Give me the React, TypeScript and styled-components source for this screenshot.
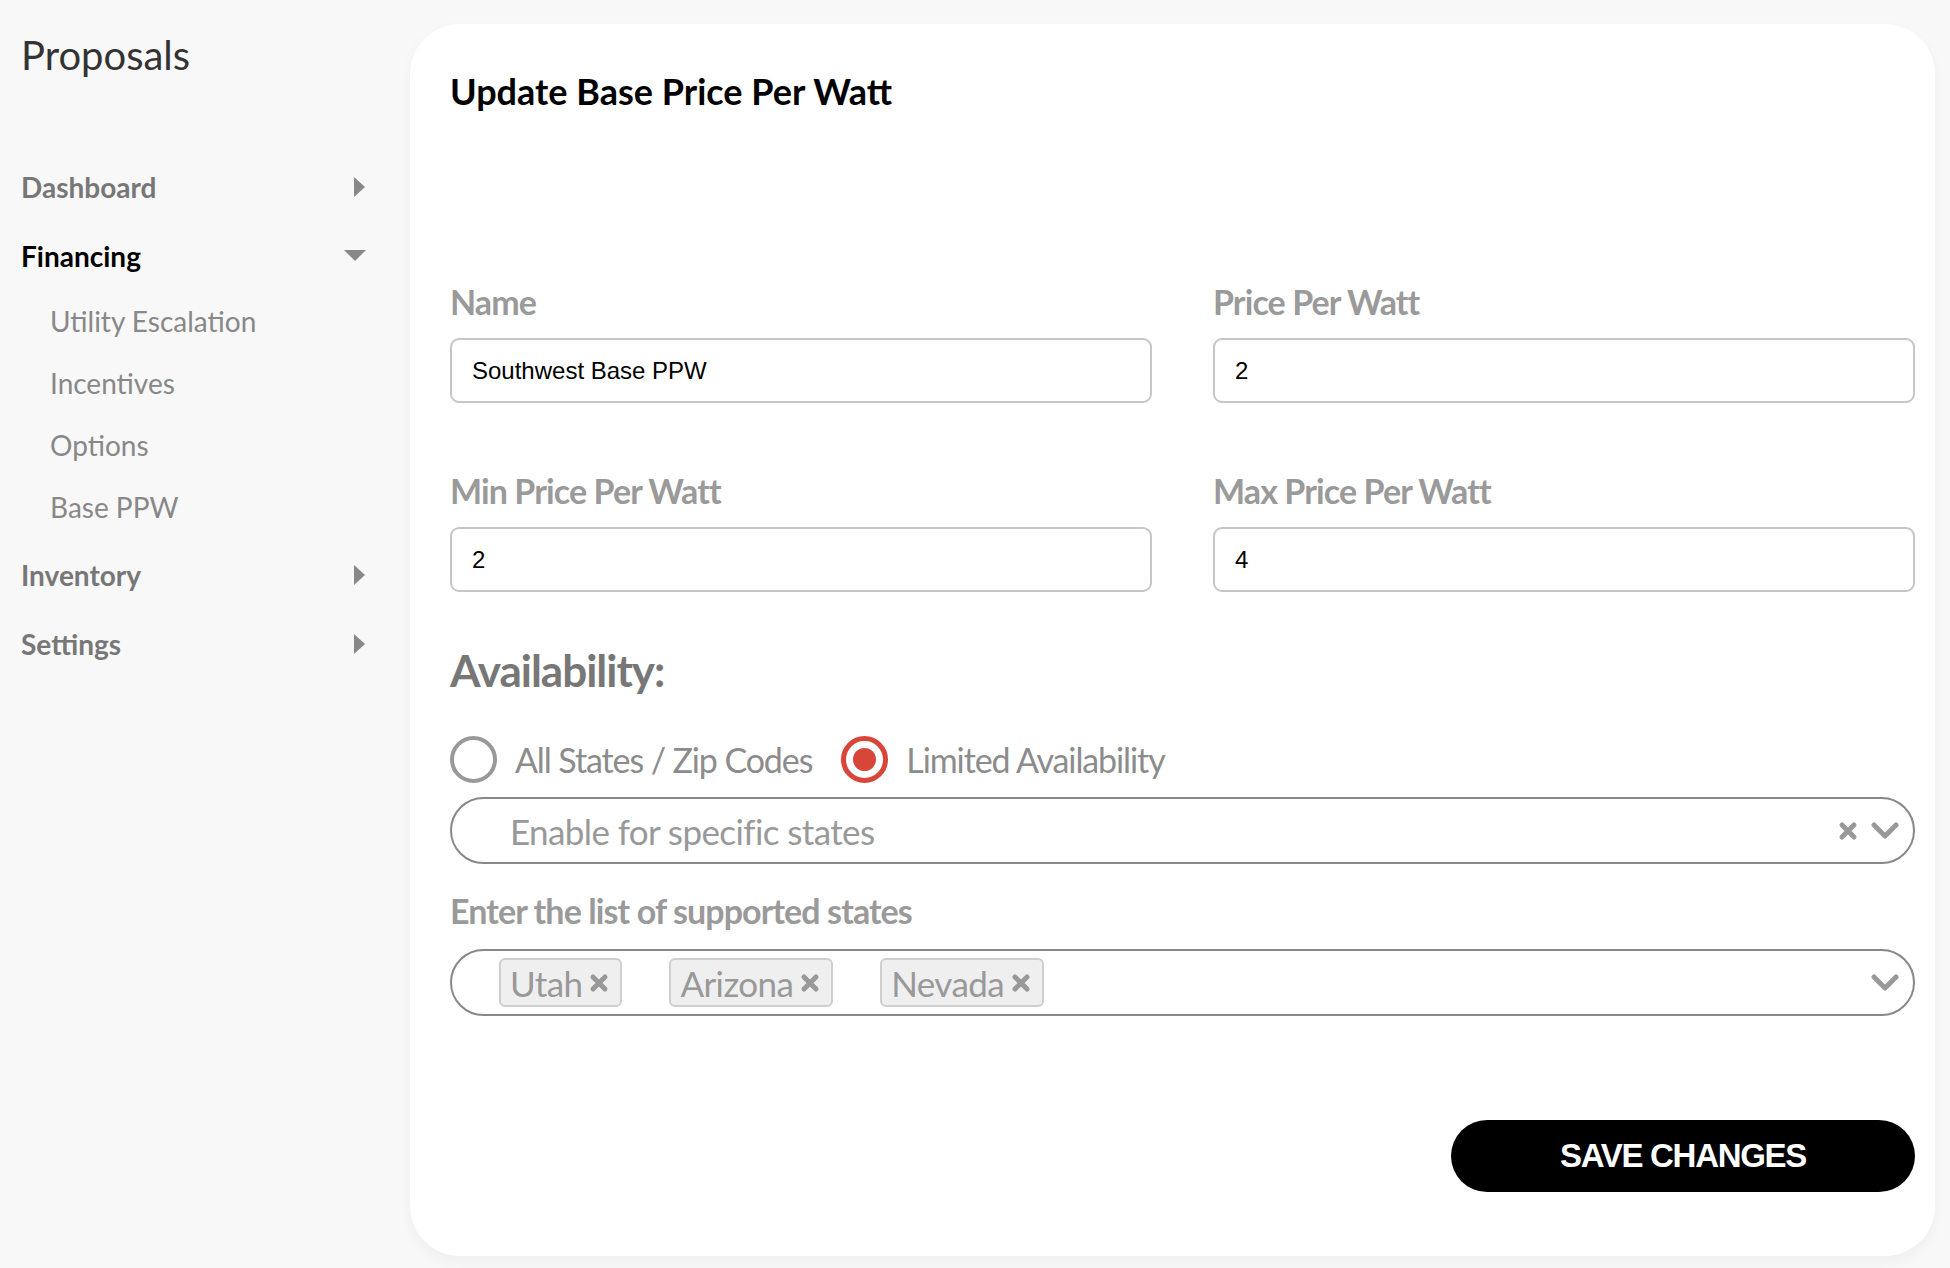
import React from "react";
import styled, { createGlobalStyle } from "styled-components";

const GlobalStyle = createGlobalStyle`
  html, body {
    margin: 0;
    padding: 0;
    background: #f8f8f8;
    font-family: Lato, "Open Sans", Arial, sans-serif;
  }
  * { box-sizing: border-box; }
`;

const Page = styled.div`
  display: flex;
  width: 1950px;
  height: 1268px;
  background: #f8f8f8;
`;

const Sidebar = styled.aside`
  width: 410px;
  flex-shrink: 0;
  padding: 31px 44px 0 21px;
`;

const Brand = styled.div`
  font-size: 40px;
  line-height: 48px;
  color: #333;
  margin-bottom: 73px;
`;

const NavItem = styled.div<{ $active?: boolean }>`
  display: flex;
  align-items: center;
  justify-content: space-between;
  height: 69px;
  font-size: 28px;
  font-weight: 700;
  color: ${(p) => (p.$active ? "#000" : "#777")};
`;

const SubList = styled.div`
  padding-bottom: 2px;
`;

const SubItem = styled.div`
  display: flex;
  align-items: center;
  height: 62px;
  padding-left: 29px;
  font-size: 28px;
  color: #888;
`;

const Caret = ({ down }: { down?: boolean }) =>
  down ? (
    <svg width="22" height="12" viewBox="0 0 22 12">
      <path d="M0 0 L22 0 L11 11 Z" fill="#888" />
    </svg>
  ) : (
    <svg width="12" height="20" viewBox="0 0 12 20">
      <path d="M0 0 L11 10 L0 20 Z" fill="#888" />
    </svg>
  );

const Card = styled.main`
  flex: 1;
  margin: 24px 15px 12px 0;
  background: #fff;
  border-radius: 50px;
  box-shadow: 0 6px 14px rgba(0, 0, 0, 0.04);
  padding: 47px 20px 0 40px;
  display: flex;
  flex-direction: column;
`;

const Title = styled.h1`
  margin: 0 0 173px;
  font-size: 36px;
  line-height: 40px;
  font-weight: 700;
  color: #000;
`;

const Grid = styled.div`
  display: grid;
  grid-template-columns: 1fr 1fr;
  column-gap: 61px;
  row-gap: 70px;
`;

const Field = styled.div`
  display: flex;
  flex-direction: column;
`;

const Label = styled.label`
  font-size: 34px;
  line-height: 36px;
  font-weight: 700;
  letter-spacing: -0.9px;
  color: #9a9a9a;
  margin-bottom: 18px;
`;

const TextInput = styled.input`
  height: 65px;
  border: 2px solid #c6c6c6;
  border-radius: 9px;
  padding: 0 20px;
  font-family: "Liberation Sans", Arial, sans-serif;
  font-size: 24px;
  color: #000;
  outline: none;
  background: #fff;
`;

const Section = styled.h2`
  margin: 54px 0 0;
  font-size: 44px;
  line-height: 48px;
  font-weight: 700;
  letter-spacing: -1px;
  color: #777;
`;

const RadioRow = styled.div`
  display: flex;
  align-items: center;
  height: 50px;
  margin-top: 40px;
  gap: 29px;
`;

const RadioOption = styled.div`
  display: flex;
  align-items: center;
  gap: 18px;
  font-size: 34px;
  letter-spacing: -1.1px;
  color: #8c8c8c;
`;

const RadioCircle = styled.span<{ $checked?: boolean }>`
  width: 47px;
  height: 47px;
  flex-shrink: 0;
  border-radius: 50%;
  border: ${(p) => (p.$checked ? "5px solid #d8463a" : "4px solid #999")};
  display: flex;
  align-items: center;
  justify-content: center;
  &::after {
    content: "";
    display: ${(p) => (p.$checked ? "block" : "none")};
    width: 23px;
    height: 23px;
    border-radius: 50%;
    background: #d8463a;
  }
`;

const SelectBox = styled.div<{ $top: number }>`
  margin-top: ${(p) => p.$top}px;
  height: 67px;
  border: 2px solid #888;
  border-radius: 34px;
  display: flex;
  align-items: center;
  padding: 0 14px 0 47px;
  gap: 12px;
`;

const Placeholder = styled.span`
  flex: 1;
  padding-left: 11px;
  font-size: 35px;
  letter-spacing: -0.6px;
  color: #999;
`;

const Chips = styled.div`
  flex: 1;
  display: flex;
  gap: 47px;
`;

const Chip = styled.span`
  display: flex;
  align-items: center;
  gap: 6px;
  height: 49px;
  padding: 0 10px 0 9px;
  background: #efefef;
  border: 2px solid #cfcfcf;
  border-radius: 6px;
  font-size: 35px;
  letter-spacing: -0.6px;
  color: #999;
`;

const SubLabel = styled(Label)`
  margin: 29px 0 20px;
`;

const Footer = styled.div`
  display: flex;
  justify-content: flex-end;
  margin-top: 104px;
`;

const SaveButton = styled.button`
  width: 464px;
  height: 72px;
  border: none;
  border-radius: 36px;
  background: #000;
  color: #fff;
  font-family: "Liberation Sans", Arial, sans-serif;
  font-weight: 700;
  font-size: 33px;
  letter-spacing: -1.3px;
`;

const XIcon = ({ size = 22 }: { size?: number }) => (
  <svg width={size} height={size} viewBox="0 0 22 22">
    <path
      d="M5 5 L17 17 M17 5 L5 17"
      stroke="#999"
      strokeWidth="5"
      strokeLinecap="round"
    />
  </svg>
);

const Chevron = () => (
  <svg width="28" height="20" viewBox="0 0 28 20">
    <path
      d="M3 4 L14 15 L25 4"
      fill="none"
      stroke="#999"
      strokeWidth="5"
      strokeLinecap="round"
      strokeLinejoin="round"
    />
  </svg>
);

const states = ["Utah", "Arizona", "Nevada"];

export default function App() {
  return (
    <Page>
      <GlobalStyle />
      <Sidebar>
        <Brand>Proposals</Brand>
        <NavItem>
          Dashboard <Caret />
        </NavItem>
        <NavItem $active>
          Financing <Caret down />
        </NavItem>
        <SubList>
          <SubItem>Utility Escalation</SubItem>
          <SubItem>Incentives</SubItem>
          <SubItem>Options</SubItem>
          <SubItem>Base PPW</SubItem>
        </SubList>
        <NavItem>
          Inventory <Caret />
        </NavItem>
        <NavItem>
          Settings <Caret />
        </NavItem>
      </Sidebar>

      <Card>
        <Title>Update Base Price Per Watt</Title>
        <Grid>
          <Field>
            <Label>Name</Label>
            <TextInput defaultValue="Southwest Base PPW" />
          </Field>
          <Field>
            <Label>Price Per Watt</Label>
            <TextInput defaultValue="2" />
          </Field>
          <Field>
            <Label>Min Price Per Watt</Label>
            <TextInput defaultValue="2" />
          </Field>
          <Field>
            <Label>Max Price Per Watt</Label>
            <TextInput defaultValue="4" />
          </Field>
        </Grid>

        <Section>Availability:</Section>
        <RadioRow>
          <RadioOption>
            <RadioCircle />
            All States / Zip Codes
          </RadioOption>
          <RadioOption>
            <RadioCircle $checked />
            Limited Availability
          </RadioOption>
        </RadioRow>

        <SelectBox $top={13}>
          <Placeholder>Enable for specific states</Placeholder>
          <XIcon />
          <Chevron />
        </SelectBox>

        <SubLabel>Enter the list of supported states</SubLabel>
        <SelectBox $top={0}>
          <Chips>
            {states.map((s) => (
              <Chip key={s}>
                {s}
                <XIcon />
              </Chip>
            ))}
          </Chips>
          <Chevron />
        </SelectBox>

        <Footer>
          <SaveButton>SAVE CHANGES</SaveButton>
        </Footer>
      </Card>
    </Page>
  );
}
